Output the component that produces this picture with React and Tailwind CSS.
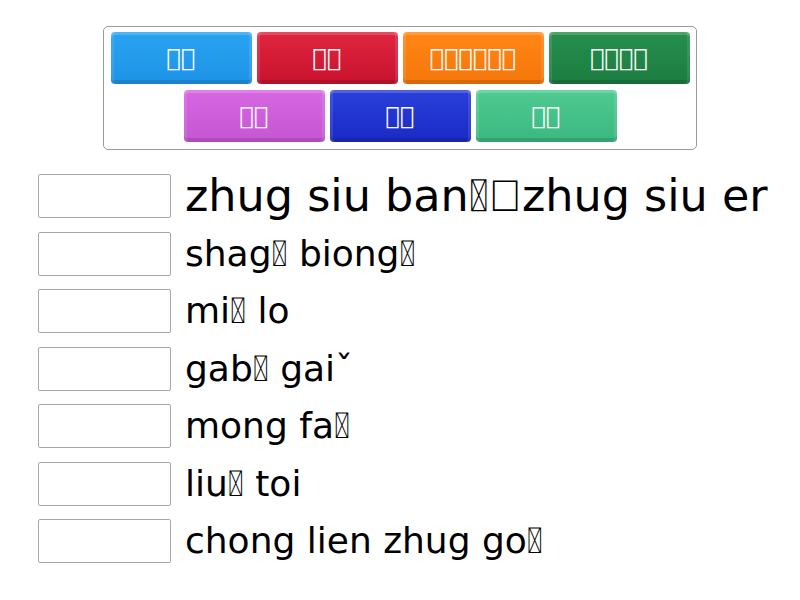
import React from 'react';

const T = '\uE000';

// missing-glyph boxes, kept as real characters
const X = () => <span className="font-['Roboto',sans-serif]">{T}</span>;
const E = () => <span className="font-['Liberation_Sans',sans-serif]">{'\uE001'}</span>;

const tiles = [
  [
    { label: T + T, bg: 'bg-[linear-gradient(#28a3f0,#1e93e6)]' },
    { label: T + T, bg: 'bg-[linear-gradient(#e0263f,#c8122d)]' },
    { label: T + T + T + T + T + T, bg: 'bg-[linear-gradient(#ff8714,#f5760a)]' },
    { label: T + T + T + T, bg: 'bg-[linear-gradient(#258f4e,#1c7c40)]' },
  ],
  [
    { label: T + T, bg: 'bg-[linear-gradient(#d867e2,#c655d3)]' },
    { label: T + T, bg: 'bg-[linear-gradient(#2a3fdb,#1a2ac4)]' },
    { label: T + T, bg: 'bg-[linear-gradient(#4fcb92,#3bb87f)]' },
  ],
];

const rows = [
  { text: <>zhug siu ban<X /><E />zhug siu er</>, big: true },
  { text: <>shag<X /> biong<X /></> },
  { text: <>mi<X /> lo</> },
  { text: <>gab<X /> gai{'\u02C7'}</> },
  { text: <>mong fa<X /></> },
  { text: <>liu<X /> toi</> },
  { text: <>chong lien zhug go<X /></> },
];

export default function App() {
  return (
    <div className="w-[800px] h-[600px] bg-white overflow-hidden font-['DejaVu_Sans',sans-serif] text-black">
      <div className="pt-[26px] flex justify-center">
        <div className="w-[594px] border border-[#9a9a9a] rounded-[5px] px-[6px] pt-[5px] pb-[7px] flex flex-col gap-[6px] items-center">
          {tiles.map((row, i) => (
            <div key={i} className="flex gap-[5px]">
              {row.map((t, j) => (
                <div
                  key={j}
                  className={`w-[141px] h-[52px] rounded-[4px] ${t.bg} flex items-center justify-center text-white text-[24px] shadow-[inset_0_3px_0_rgba(255,255,255,0.18),inset_3px_0_0_rgba(255,255,255,0.1),inset_-3px_0_0_rgba(255,255,255,0.1),inset_0_-4px_0_rgba(0,0,0,0.12)]`}
                >
                  {t.label}
                </div>
              ))}
            </div>
          ))}
        </div>
      </div>
      <div className="mt-[24px] pl-[38px] flex flex-col gap-[13.5px]">
        {rows.map((r, i) => (
          <div key={i} className="flex items-center gap-[14px] h-[44px]">
            <div className="w-[133px] h-[44px] border border-[#a8a8a8] rounded-[2px] shrink-0" />
            <span className={`whitespace-nowrap leading-none ${r.big ? 'text-[44.5px]' : 'text-[36px]'}`}>{r.text}</span>
          </div>
        ))}
      </div>
    </div>
  );
}
